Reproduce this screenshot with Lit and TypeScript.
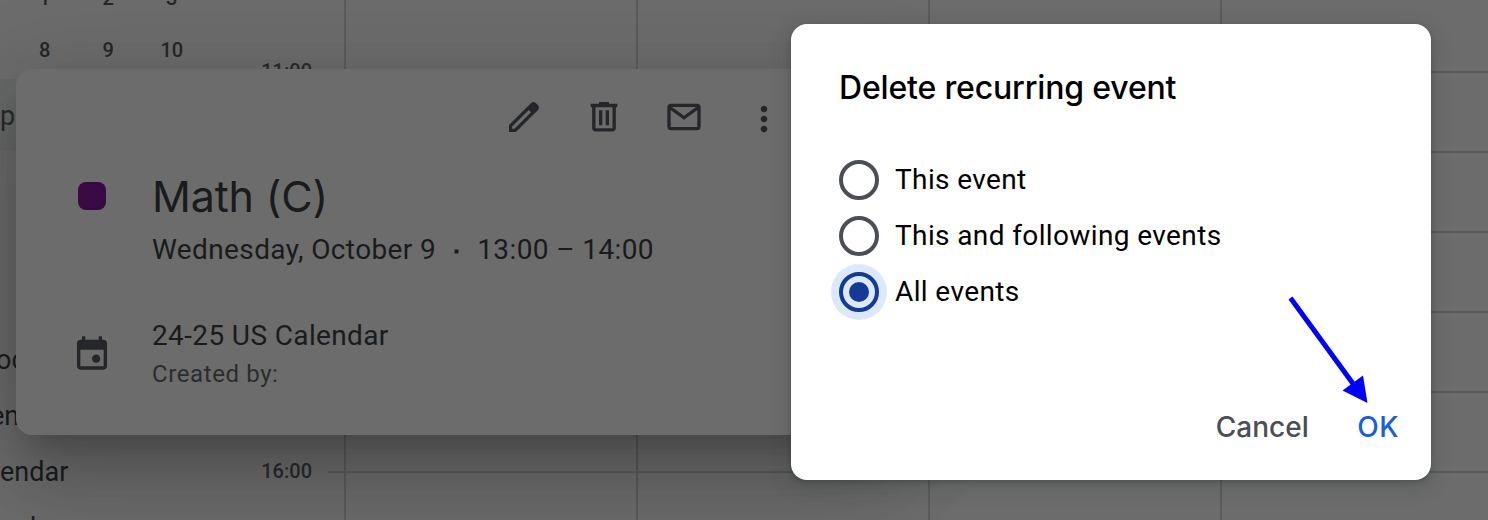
import { LitElement, html, css, svg } from "lit";
import { customElement, property } from "lit/decorators.js";

const icons: Record<string, unknown> = {
  edit: svg`<path fill-rule="evenodd" d="M20.41 4.94l-1.35-1.35c-.78-.78-2.05-.78-2.83 0L3 16.82V21h4.18L20.41 7.77c.79-.78.79-2.05 0-2.83zM6.3 19.1H4.9v-1.4L14.9 7.8l1.3 1.3z"/>`,
  trash: svg`<path fill-rule="evenodd" d="M15 4.1V3H9v1.1H4v2h.9v12.7c0 1.1.9 1.9 2 1.9h10.2c1.1 0 2-.8 2-1.9V6.1h.9v-2h-5zm2.1 14.7H6.900V6.100h10.200z"/><path d="M9 8h2v8.900H9zm4 0h2v8.900h-2z"/>`,
  mail: svg`<path d="M20 4H4c-1.1 0-2 .9-2 2v12c0 1.1.9 2 2 2h16c1.1 0 2-.9 2-2V6c0-1.1-.9-2-2-2zm-.8 2L12 11.2 4.8 6h14.4zM4 18V7.870l8 5.800 8-5.800V18H4z"/>`,
  more: svg`<path transform="translate(0 1.200)" d="M12 8c1.1 0 2-.9 2-2s-.9-2-2-2-2 .9-2 2 .9 2 2 2zm0 2c-1.1 0-2 .9-2 2s.9 2 2 2 2-.9 2-2-.9-2-2-2zm0 6c-1.1 0-2 .9-2 2s.9 2 2 2 2-.9 2-2-.9-2-2-2z"/>`,
  calendar: svg`<path fill-rule="evenodd" d="M6 1.900h2V4h8V1.900h2V4h1c1.100 0 2 .9 2 2v14c0 1.100-.9 2-2 2H5c-1.100 0-2-.9-2-2V6c0-1.100.9-2 2-2h1zM5 10v10h14V10z"/><circle cx="14.500" cy="15.400" r="2.500"/>`,
};

@customElement("cal-icon")
class CalIcon extends LitElement {
  @property() name = "";
  static styles = css`
    :host { display: block; width: 40px; height: 40px; }
    svg { display: block; width: 100%; height: 100%; fill: #25262a; }
  `;
  render() {
    return html`<svg viewBox="0 0 24 24">${icons[this.name]}</svg>`;
  }
}

@customElement("cal-week")
class CalWeek extends LitElement {
  static styles = css`
    :host { display: grid; grid-template-columns: 240px 88px 1fr; height: 520px; overflow: hidden; background: #6c6c6c; font-family: Roboto, sans-serif; color: #1b1c1d; }
    .side { overflow: hidden; }
    .mini { display: grid; grid-template-columns: repeat(3, 63.5px); padding-left: 13px; margin-top: -28px; font-size: 20px; font-weight: 500; color: #25272a; text-align: center; }
    .mini span { height: 52px; line-height: 52px; }
    .search { height: 72px; line-height: 74px; margin-top: 3px; background: #666968; font-size: 27px; color: #292b2d; }
    .list { margin-top: 181px; font-size: 27px; }
    .row { height: 56px; line-height: 56px; white-space: nowrap; }
    .first { margin-left: -4px; }
    .second { margin-left: -10px; }
    .tail { padding-left: 6px; }
    .hours { display: flex; flex-direction: column; justify-content: space-between; height: 480px; padding-top: 32px; font-size: 20px; font-weight: 500; color: #292b2e; text-align: right; }
    .hour { height: 80px; line-height: 78px; padding-right: 16px; flex: none; }
    .grid { display: grid; grid-template-columns: 18px repeat(3, 292px) 1fr; margin-top: -7px; background: repeating-linear-gradient(#6c6c6c 0 78px, #5b5b5b 78px 80px); }
    .day { border-right: 2px solid #5b5b5b; }
  `;
  render() {
    return html`
      <div class="side">
        <div class="mini">${["1", "2", "3", "8", "9", "10"].map((d) => html`<span>${d}</span>`)}</div>
        <div class="search">p</div>
        <div class="list">
          <div class="row first">oc</div>
          <div class="row second">en</div>
          <div class="row">endar</div>
          <div class="row tail">nd</div>
        </div>
      </div>
      <div class="hours">
        ${["11:00", "16:00"].map((h) => html`<div class="hour">${h}</div>`)}
      </div>
      <div class="grid"><div class="day"></div><div class="day"></div><div class="day"></div><div class="day"></div></div>
    `;
  }
}

@customElement("event-card")
class EventCard extends LitElement {
  static styles = css`
    :host { display: block; box-sizing: border-box; background: #6c6c6c; border-radius: 16px; font-family: Roboto, sans-serif; color: #1a1b1c; padding: 28px 0 0 56px;
      box-shadow: 0 48px 76px 6px rgba(0,0,0,.14), 0 18px 92px 16px rgba(0,0,0,.12), 0 22px 30px -14px rgba(0,0,0,.2); }
    .actions { display: flex; gap: 40px; padding-left: 432px; height: 40px; }
    .main { display: grid; grid-template-columns: 40px 1fr; column-gap: 40px; margin-top: 31px; }
    .swatch { width: 28px; height: 28px; border-radius: 8px; background: #3a0a45; margin: 14px 0 0 6px; }
    .title { font-family: Inter, sans-serif; font-size: 43px; line-height: 56px; letter-spacing: -.15px; }
    .when { font-size: 28px; line-height: 40px; margin-top: 6px; letter-spacing: .39px; white-space: pre; display: flex; }
    .dot { width: 41px; text-align: center; font-weight: 700; line-height: 43px; height: 40px; }
    .info { display: grid; grid-template-columns: 40px 1fr; column-gap: 40px; margin-top: 46px; }
    .cal { margin-top: 17px; }
    .name { font-size: 28px; line-height: 40px; letter-spacing: .37px; }
    .by { font-size: 24px; line-height: 36px; letter-spacing: .6px; color: #2b2c2f; }
  `;
  render() {
    return html`
      <div class="actions">${["edit", "trash", "mail", "more"].map((n) => html`<cal-icon name=${n}></cal-icon>`)}</div>
      <div class="main">
        <div class="swatch"></div>
        <div>
          <div class="title">Math (C)</div>
          <div class="when"><span>Wednesday, October 9</span><span class="dot">⋅</span><span>13:00 – 14:00</span></div>
        </div>
      </div>
      <div class="info">
        <cal-icon class="cal" name="calendar"></cal-icon>
        <div><div class="name">24-25 US Calendar</div><div class="by">Created by:</div></div>
      </div>
    `;
  }
}

@customElement("delete-dialog")
class DeleteDialog extends LitElement {
  static styles = css`
    :host { display: flex; flex-direction: column; box-sizing: border-box; background: #fff; border-radius: 16px; padding: 40px 32px 33px 48px; font-family: Roboto, sans-serif; color: #000;
      box-shadow: 0 2px 5px rgba(30,40,40,.25), 0 5px 20px 2px rgba(40,50,50,.22); }
    .title { font-family: Inter, sans-serif; font-size: 32px; font-weight: 500; line-height: 48px; letter-spacing: -.17px; }
    .options { margin-top: 40px; }
    .option { display: flex; align-items: center; gap: 16px; height: 56px; font-size: 28px; letter-spacing: .38px; }
    .label { margin-bottom: 2px; }
    .radio { box-sizing: border-box; width: 40px; height: 40px; border: 4px solid #4b4e53; border-radius: 50%; display: flex; align-items: center; justify-content: center; }
    .on { border-color: #133a97; box-shadow: 0 0 0 8px #dce8fb; background: #dce8fb; }
    .on::after { content: ""; width: 20px; height: 20px; border-radius: 50%; background: #133a97; }
    .buttons { display: flex; justify-content: flex-end; gap: 48.5px; margin-top: auto; font-family: Inter, sans-serif; font-size: 28px; font-weight: 500; line-height: 40px; }
    .cancel { color: #4b4e54; }
    .ok { color: #155fe0; letter-spacing: .5px; }
  `;
  render() {
    return html`
      <div class="title">Delete recurring event</div>
      <div class="options">
        ${["This event", "This and following events", "All events"].map(
          (t, i) => html`<div class="option"><span class="radio ${i === 2 ? "on" : ""}"></span><span class="label">${t}</span></div>`
        )}
      </div>
      <div class="buttons"><span class="cancel">Cancel</span><span class="ok">OK</span></div>
    `;
  }
}

@customElement("app-root")
class AppRoot extends LitElement {
  static styles = css`
    :host { display: block; position: relative; width: 1488px; height: 520px; overflow: hidden; }
    .card { position: absolute; left: 16px; top: 69px; width: 880px; height: 366px; }
    .dialog { position: absolute; left: 791px; top: 24px; width: 640px; height: 456px; }
    .arrow { position: absolute; left: 1280px; top: 290px; width: 100px; height: 120px; }
  `;
  render() {
    return html`
      <cal-week></cal-week>
      <event-card class="card"></event-card>
      <delete-dialog class="dialog"></delete-dialog>
      <svg class="arrow" viewBox="1280 290 100 120">
        <path d="M1290.5 298L1354 385" stroke="#00f" stroke-width="5" />
        <path d="M1367.5 403L1342.5 390.500L1363 375.500Z" fill="#00f" />
      </svg>
    `;
  }
}
